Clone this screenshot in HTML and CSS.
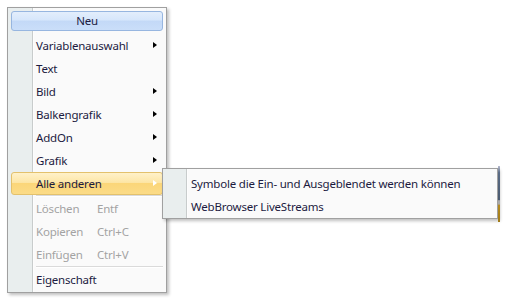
FILE: index.html
```html
<!DOCTYPE html>
<html lang="de">
<head>
	<meta charset="UTF-8">
	<title>Kontextmenü</title>
	<link rel="stylesheet" href="styles.css">
</head>
<body>
	<div class="desk">
		<div class="menu">
			<div class="neu">Neu</div>
			<ul class="items">
				<li class="item sub">Variablenauswahl</li>
				<li class="item">Text</li>
				<li class="item sub">Bild</li>
				<li class="item sub">Balkengrafik</li>
				<li class="item sub">AddOn</li>
				<li class="item sub">Grafik</li>
				<li class="item sub hot">Alle anderen</li>
				<li class="sep"></li>
				<li class="item off"><span class="label">Löschen</span><span class="key">Entf</span></li>
				<li class="item off"><span class="label">Kopieren</span><span class="key">Ctrl+C</span></li>
				<li class="item off"><span class="label">Einfügen</span><span class="key">Ctrl+V</span></li>
				<li class="sep"></li>
				<li class="item">Eigenschaft</li>
			</ul>
		</div>

		<div class="submenu">
			<ul class="items">
				<li class="item">Symbole die Ein- und Ausgeblendet werden können</li>
				<li class="item">WebBrowser LiveStreams</li>
			</ul>
		</div>

		<div class="behind"></div>
	</div>
</body>
</html>
```

FILE: styles.css
```css
*{
	margin: 0;
	padding: 0;
	box-sizing: border-box;
}
ul,li{
	list-style: none;
}
body{
	background: #fff;
	font-family: "Noto Sans", "Open Sans", sans-serif;
	font-size: 11.5px;
	letter-spacing: -0.2px;
	color: #1c1b3f;
}
.desk{
	position: relative;
	width: 509px;
	height: 302px;
	overflow: hidden;
}
.menu{
	position: absolute;
	left: 7px;
	top: 7px;
	width: 160px;
	height: 286px;
	border: 1px solid #a0a0a0;
	padding-top: 3px;
	background: linear-gradient(to right, #e9eeee 0, #e9eeee 24px, #c8cccc 24px, #c8cccc 25px, #fdfdfd 25px, #fdfdfd 26px, #fafafa 26px);
	box-shadow: 2px 2px 3px rgba(0,0,0,0.25);
}
.neu{
	margin: 0 3px 3px 3px;
	height: 20px;
	line-height: 18px;
	text-align: center;
	border: 1px solid #97b6e0;
	border-radius: 3px;
	background: linear-gradient(to bottom, #e3eefc 0%, #d6e6fb 45%, #c3d9f7 50%, #cadef9 100%);
	color: #1c1b3f;
}
.item{
	position: relative;
	display: flex;
	align-items: center;
	height: 23px;
	padding-left: 25px;
	margin: 0 3px;
}
.item.sub::after{
	content: "";
	position: absolute;
	right: 6px;
	top: 8px;
	border-left: 4px solid #000;
	border-top: 3.5px solid transparent;
	border-bottom: 3.5px solid transparent;
}
.item.hot{
	border: 1px solid #e3c16c;
	border-radius: 3px;
	padding-left: 24px;
	background: linear-gradient(to bottom, #fff1c9 0%, #fde6a6 45%, #fbd679 50%, #fbdb87 100%);
}
.item.hot::after{
	right: 5px;
	top: 7px;
	border-left-color: #fff;
}
.item.off{
	color: #a3a3a3;
}
.label{
	width: 61px;
}
.sep{
	height: 2px;
	margin: 0 3px 0 28px;
	border-top: 1px solid #dadada;
	border-bottom: 1px solid #fff;
}
.submenu{
	position: absolute;
	left: 162px;
	top: 168px;
	width: 336px;
	height: 51px;
	border: 1px solid #a0a0a0;
	padding-top: 3px;
	background: linear-gradient(to right, #e9eeee 0, #e9eeee 23px, #c8cccc 23px, #c8cccc 24px, #fdfdfd 24px, #fdfdfd 25px, #fafafa 25px);
	box-shadow: 2px 2px 3px rgba(0,0,0,0.25);
}
.submenu .item{
	padding-left: 25px;
}
.behind{
	position: absolute;
	left: 498px;
	top: 166px;
	width: 2px;
	height: 56px;
	background: linear-gradient(to bottom, #b8bcd0 0, #5a6c86 12%, #4a5a70 60%, #a8a8a8 62%, #a8a8a8 68%, #b48a20 70%, #a07a18 100%);
}
```
